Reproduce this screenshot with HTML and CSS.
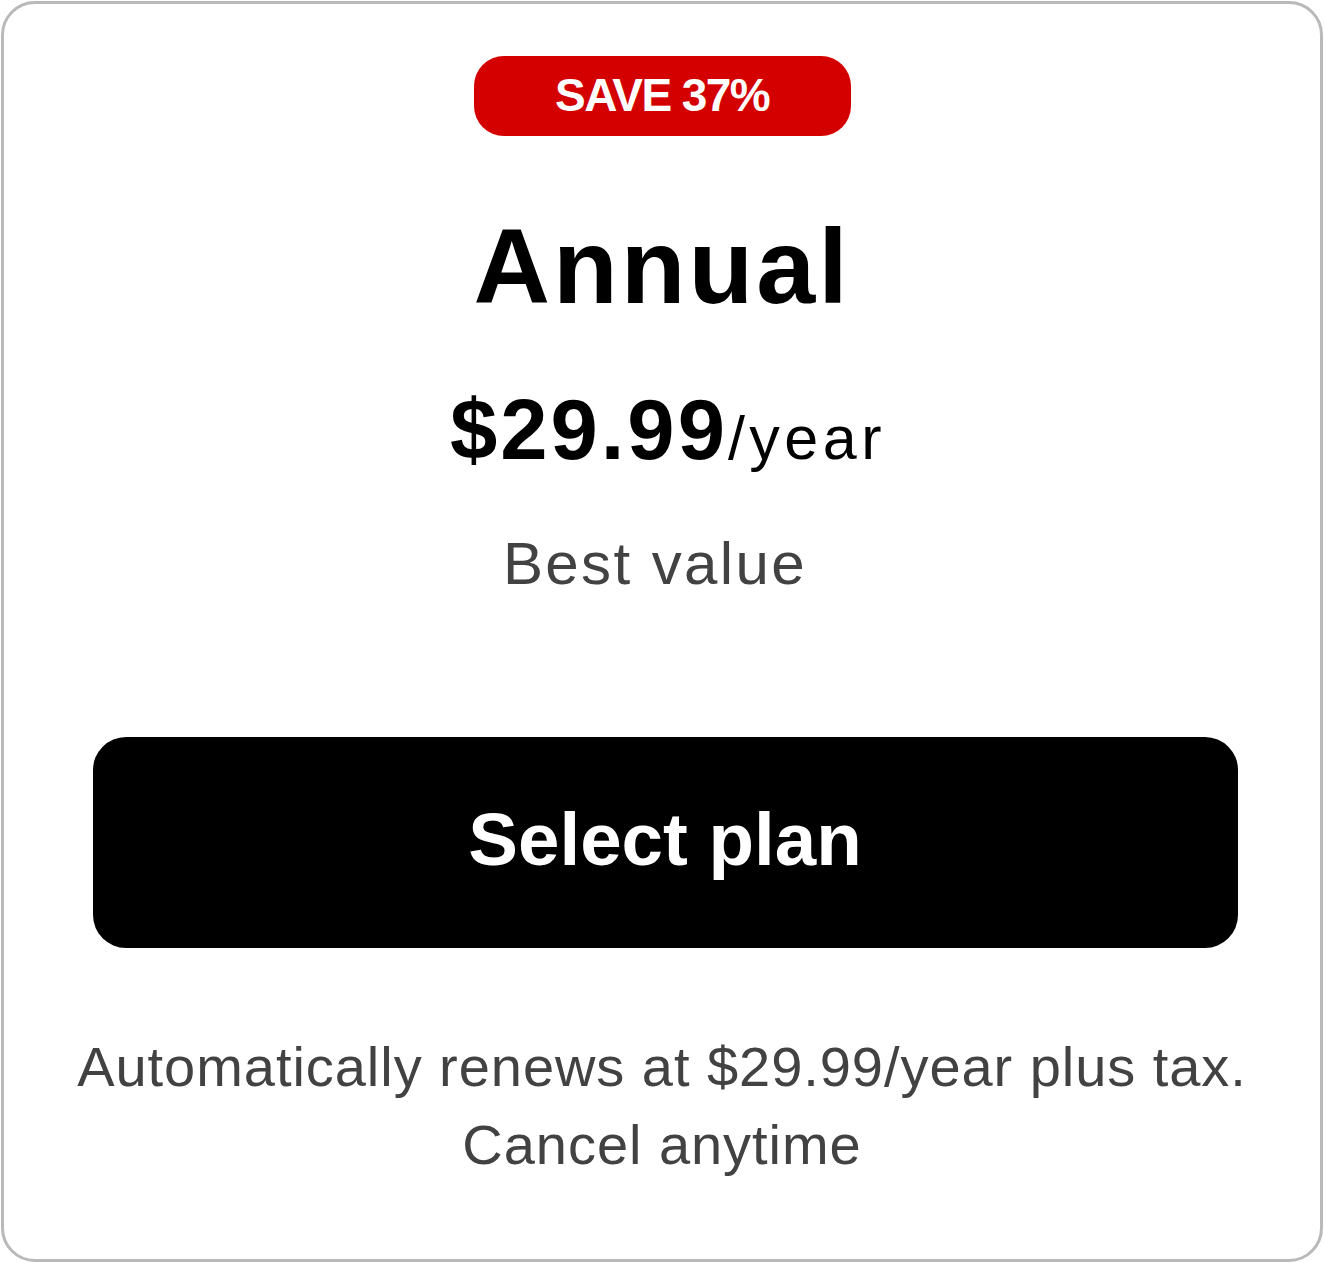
FILE: index.html
```html
<!DOCTYPE html>
<html lang="en">
<head>
    <meta charset="UTF-8">
    <meta name="viewport" content="width=device-width, initial-scale=1.0">
    <title>Annual Plan</title>
    <link rel="stylesheet" href="styles.css">
</head>
<body>
    <div class="plan-card">
        <span class="plan-badge">SAVE 37%</span>

        <h2 class="plan-name">Annual</h2>

        <p class="plan-price"><span class="price-amount">$29.99</span><span class="price-period">/year</span></p>

        <p class="plan-note">Best value</p>

        <button class="select-button" type="button">Select plan</button>

        <p class="plan-terms">
            Automatically renews at $29.99/year plus tax.<br>
            Cancel anytime
        </p>
    </div>
</body>
</html>
```

FILE: styles.css
```css
* {
    margin: 0;
    padding: 0;
    box-sizing: border-box;
}

body {
    font-family: "Liberation Sans", Arial, Helvetica, sans-serif;
    background: #fff;
    color: #000;
}

.plan-card {
    width: 1322px;
    height: 1261px;
    margin: 1px;
    padding-top: 52px;
    background: #fff;
    border: 3px solid #b9b9b9;
    border-radius: 34px;
    display: flex;
    flex-direction: column;
    align-items: center;
    text-align: center;
}

.plan-badge {
    width: 377px;
    height: 80px;
    display: flex;
    justify-content: center;
    align-items: center;
    padding-bottom: 3px;
    background: #d40000;
    color: #fff;
    border-radius: 30px;
    font-size: 46px;
    font-weight: 700;
    letter-spacing: -1.6px;
}

.plan-name {
    margin-top: 77px;
    font-size: 106px;
    line-height: 106px;
    font-weight: 700;
    letter-spacing: 3px;
}

.plan-price {
    margin-top: 68px;
    padding-left: 12px;
    font-size: 85px;
    line-height: 85px;
    white-space: nowrap;
}

.price-amount {
    font-weight: 700;
    letter-spacing: 3px;
}

.price-period {
    font-size: 61px;
    line-height: 1;
    letter-spacing: 4.5px;
}

.plan-note {
    margin-top: 62px;
    padding-right: 14px;
    font-size: 60px;
    line-height: 60px;
    color: #424242;
    letter-spacing: 2.4px;
}

.select-button {
    width: 1145px;
    height: 211px;
    margin-top: 143px;
    margin-left: 6px;
    padding-bottom: 7px;
    background: #000;
    color: #fff;
    border: none;
    border-radius: 33px;
    font-family: inherit;
    font-size: 74.5px;
    font-weight: 700;
    cursor: pointer;
}

.plan-terms {
    margin-top: 80px;
    font-size: 56px;
    line-height: 78px;
    color: #424242;
    letter-spacing: 0.95px;
}
```
